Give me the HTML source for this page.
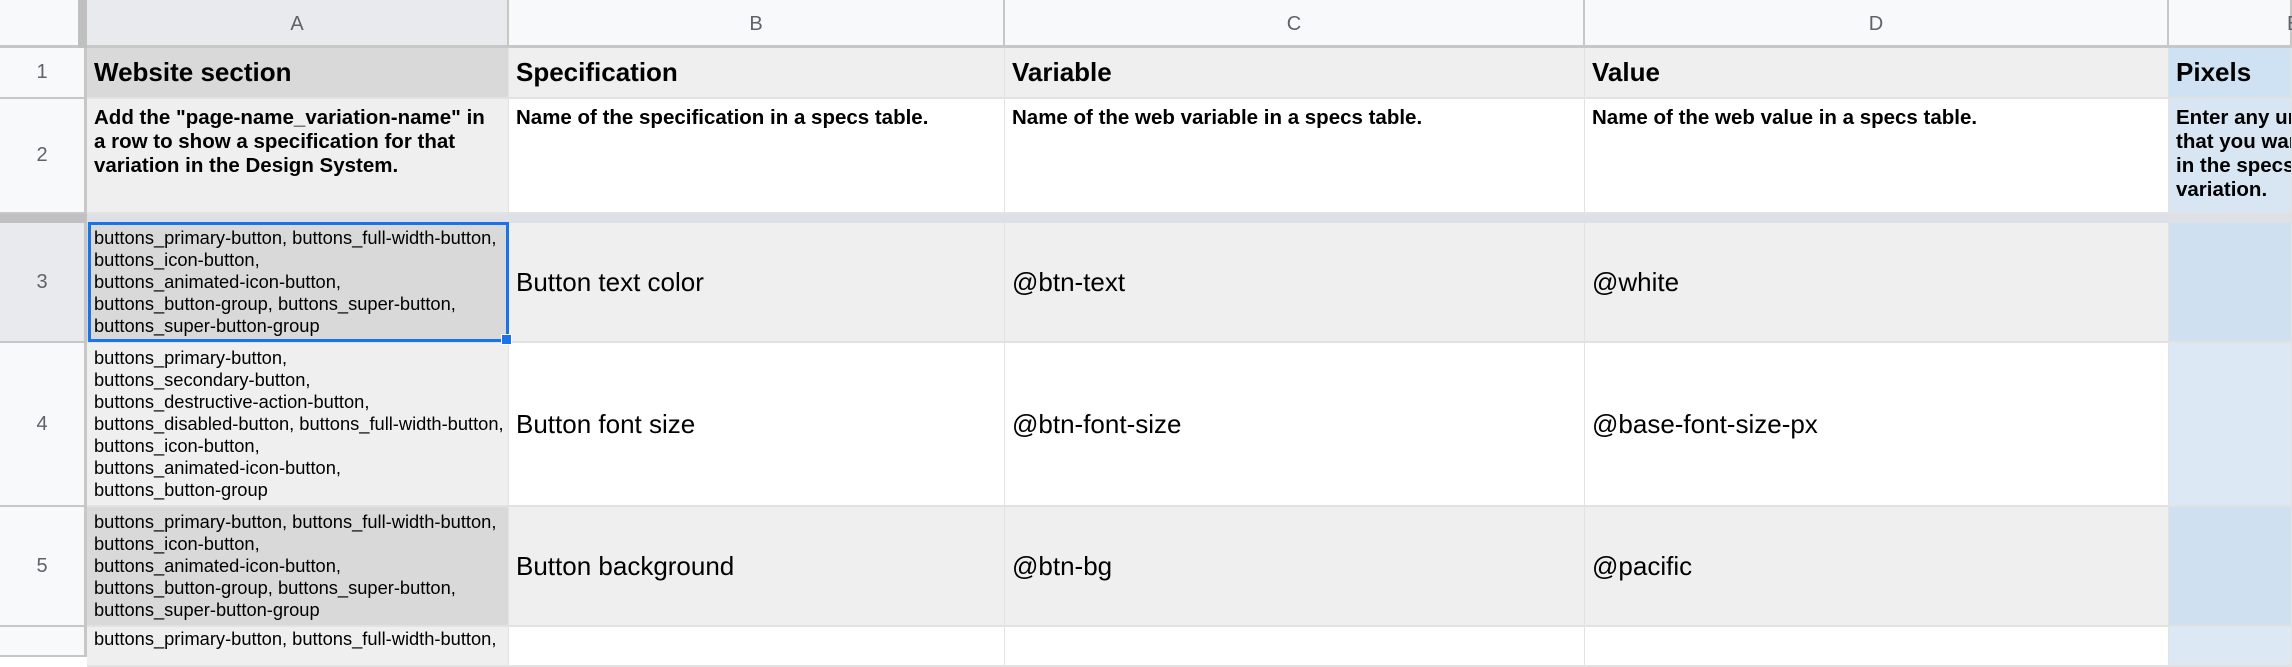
<!DOCTYPE html>
<html><head><meta charset="utf-8"><style>
*{margin:0;padding:0;box-sizing:border-box}
body{width:2292px;height:646px;overflow:hidden;background:#fff;font-family:"Liberation Sans",Arial,sans-serif;position:relative}
.c{position:absolute;overflow:hidden;border-right:1px solid #e2e2e2;border-bottom:2px solid #e2e2e2;color:#000;white-space:nowrap}
.h{position:absolute;top:0;height:48px;background:#f8f9fa;border-right:2px solid #c7c7c7;border-bottom:3px solid #c7c7c7;color:#5f6368;font-size:20px;text-align:center;line-height:48px}
.rn{position:absolute;left:0;width:87px;background:#f8f9fa;border-right:3px solid #c7c7c7;border-bottom:2px solid #c7c7c7;color:#5f6368;font-size:20px;text-align:center;display:flex;align-items:center;justify-content:center}
.b1{font-weight:bold;font-size:26px;padding-left:7px;display:flex;align-items:center}
.b2{font-weight:bold;font-size:20.5px;line-height:24px;padding:7px 7px}
.sm{font-size:18.3px;line-height:22px;padding:0 7px;display:flex;align-items:center}
.big{font-size:26px;padding-left:7px;display:flex;align-items:center}
</style></head><body>
<div class="h" style="left:0;width:87px;border-right:none"></div>
<div style="position:absolute;left:78px;top:0;width:9px;height:48px;background:#c0c0c0"></div>
<div class="h" style="left:87px;width:422px;background:#e8eaed">A</div>
<div class="h" style="left:509px;width:496px">B</div>
<div class="h" style="left:1005px;width:580px">C</div>
<div class="h" style="left:1585px;width:584px">D</div>
<div class="h" style="left:2169px;width:123px;text-align:left;padding-left:118px">E</div>

<div class="rn" style="top:48px;height:51px">1</div>
<div class="rn" style="top:99px;height:115px">2</div>
<div style="position:absolute;left:0;top:214px;width:87px;height:9px;background:#c0c0c0"></div>
<div style="position:absolute;left:87px;top:214px;width:2205px;height:9px;background:#dde0e6"></div>
<div class="rn" style="top:223px;height:120px;background:#e8eaed">3</div>
<div class="rn" style="top:343px;height:164px">4</div>
<div class="rn" style="top:507px;height:120px">5</div>
<div class="rn" style="top:627px;height:30px"></div>

<div class="c b1" style="left:87px;top:48px;width:422px;height:51px;background:#d9d9d9">Website section</div>
<div class="c b1" style="left:509px;top:48px;width:496px;height:51px;background:#efefef">Specification</div>
<div class="c b1" style="left:1005px;top:48px;width:580px;height:51px;background:#efefef">Variable</div>
<div class="c b1" style="left:1585px;top:48px;width:584px;height:51px;background:#efefef">Value</div>
<div class="c b1" style="left:2169px;top:48px;width:123px;height:51px;background:#cfe2f3">Pixels</div>

<div class="c b2" style="left:87px;top:99px;width:422px;height:115px;background:#efefef">Add the "page-name_variation-name" in<br>a row to show a specification for that<br>variation in the Design System.</div>
<div class="c b2" style="left:509px;top:99px;width:496px;height:115px">Name of the specification in a specs table.</div>
<div class="c b2" style="left:1005px;top:99px;width:580px;height:115px">Name of the web variable in a specs table.</div>
<div class="c b2" style="left:1585px;top:99px;width:584px;height:115px">Name of the web value in a specs table.</div>
<div class="c b2" style="left:2169px;top:99px;width:123px;height:115px;background:#d8e6f3">Enter any unit<br>that you want<br>in the specs<br>variation.</div>

<div class="c sm" style="left:87px;top:223px;width:422px;height:120px;background:#d9d9d9">buttons_primary-button, buttons_full-width-button,<br>buttons_icon-button,<br>buttons_animated-icon-button,<br>buttons_button-group, buttons_super-button,<br>buttons_super-button-group</div>
<div class="c big" style="left:509px;top:223px;width:496px;height:120px;background:#efefef">Button text color</div>
<div class="c big" style="left:1005px;top:223px;width:580px;height:120px;background:#efefef">@btn-text</div>
<div class="c big" style="left:1585px;top:223px;width:584px;height:120px;background:#efefef">@white</div>
<div class="c" style="left:2169px;top:223px;width:123px;height:120px;background:#cfe0f1"></div>

<div class="c sm" style="left:87px;top:343px;width:422px;height:164px;background:#efefef">buttons_primary-button,<br>buttons_secondary-button,<br>buttons_destructive-action-button,<br>buttons_disabled-button, buttons_full-width-button,<br>buttons_icon-button,<br>buttons_animated-icon-button,<br>buttons_button-group</div>
<div class="c big" style="left:509px;top:343px;width:496px;height:164px">Button font size</div>
<div class="c big" style="left:1005px;top:343px;width:580px;height:164px">@btn-font-size</div>
<div class="c big" style="left:1585px;top:343px;width:584px;height:164px">@base-font-size-px</div>
<div class="c" style="left:2169px;top:343px;width:123px;height:164px;background:#dce8f3"></div>

<div class="c sm" style="left:87px;top:507px;width:422px;height:120px;background:#d9d9d9">buttons_primary-button, buttons_full-width-button,<br>buttons_icon-button,<br>buttons_animated-icon-button,<br>buttons_button-group, buttons_super-button,<br>buttons_super-button-group</div>
<div class="c big" style="left:509px;top:507px;width:496px;height:120px;background:#efefef">Button background</div>
<div class="c big" style="left:1005px;top:507px;width:580px;height:120px;background:#efefef">@btn-bg</div>
<div class="c big" style="left:1585px;top:507px;width:584px;height:120px;background:#efefef">@pacific</div>
<div class="c" style="left:2169px;top:507px;width:123px;height:120px;background:#cfe0f1"></div>

<div class="c sm" style="left:87px;top:627px;width:422px;height:40px;background:#efefef;align-items:flex-start;padding-top:1px">buttons_primary-button, buttons_full-width-button,</div>
<div class="c" style="left:509px;top:627px;width:496px;height:40px"></div>
<div class="c" style="left:1005px;top:627px;width:580px;height:40px"></div>
<div class="c" style="left:1585px;top:627px;width:584px;height:40px"></div>
<div class="c" style="left:2169px;top:627px;width:123px;height:40px;background:#dce8f3"></div>

<div style="position:absolute;left:88px;top:222px;width:421px;height:120px;border:3px solid #1a73e8"></div>
<div style="position:absolute;left:501px;top:334px;width:11px;height:11px;background:#1a73e8;border:1px solid #fff"></div>
</body></html>
